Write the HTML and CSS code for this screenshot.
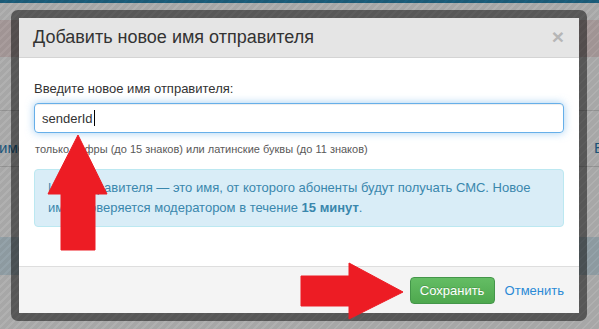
FILE: index.html
```html
<!DOCTYPE html>
<html lang="ru">
<head>
<meta charset="utf-8">
<title>Добавить новое имя отправителя</title>
<link rel="stylesheet" href="styles.css">
</head>
<body>
<div class="page">
  <div class="topbar"></div>
  <div class="gap-a"></div>
  <div class="danger-band"></div>
  <div class="gap-b"></div>
  <div class="table-row">
    <span class="cell-left">имё</span>
    <span class="cell-right">В</span>
  </div>
  <div class="gap-c"></div>
  <div class="info-band"></div>
</div>

<div class="backdrop"></div>

<div class="modal">
  <div class="modal-content">
    <div class="modal-header">
      <h4 class="modal-title">Добавить новое имя отправителя</h4>
      <span class="close">×</span>
    </div>
    <div class="modal-body">
      <label class="label">Введите новое имя отправителя:</label>
      <div class="input"><span class="input-text">senderId</span><span class="caret"></span></div>
      <p class="help">только цифры (до 15 знаков) или латинские буквы (до 11 знаков)</p>
      <div class="alert">Имя отправителя — это имя, от которого абоненты будут получать СМС. Новое<br>имя проверяется модератором в течение <b>15 минут</b>.</div>
    </div>
    <div class="modal-footer">
      <span class="btn-save">Сохранить</span>
      <a class="cancel">Отменить</a>
    </div>
  </div>
</div>

<svg class="arrows" width="599" height="329" viewBox="0 0 599 329">
  <polygon class="arrow" points="78,135 107,194 95,194 95,250 61,250 61,194 48,194"/>
  <polygon class="arrow" points="301,276 349,276 349,263 403,292 349,319 349,306 301,306"/>
</svg>
</body>
</html>
```
FILE: styles.css
```css
* { box-sizing: border-box; }
html, body { margin: 0; padding: 0; }
body {
  width: 599px;
  height: 329px;
  overflow: hidden;
  font-family: "Liberation Sans", Arial, sans-serif;
  font-size: 13px;
  color: #333;
  background: #fff;
}

.page { display: flex; flex-direction: column; }
.topbar { height: 3px; background: #2a8ab5; }
.gap-a { height: 17px; }
.danger-band { height: 37px; background: #f4e2e2; }
.gap-b { height: 53px; }
.table-row {
  height: 57px;
  border-top: 1px solid #dcdcdc;
  border-bottom: 1px solid #dcdcdc;
  display: flex;
  justify-content: space-between;
  align-items: flex-start;
  padding-top: 28px;
  overflow: hidden;
  color: #2e7fb6;
  font-size: 15px;
  line-height: 17px;
}
.cell-left { margin-left: -1px; }
.cell-right { margin-right: -5px; }
.gap-c { height: 70px; }
.info-band { height: 38px; background: #d7ebf5; }

.backdrop {
  position: fixed;
  inset: 0;
  background: repeating-linear-gradient(135deg,
    rgba(0,0,0,.345) 0, rgba(0,0,0,.345) 4px,
    rgba(0,0,0,.31) 4px, rgba(0,0,0,.31) 5.66px);
}

.modal {
  position: absolute;
  left: 11px;
  top: 10px;
  width: 576px;
  height: 311px;
  border: 8px solid rgba(0,0,0,.48);
  border-radius: 7px;
  background-clip: padding-box;
}
.modal-content {
  height: 100%;
  display: flex;
  flex-direction: column;
  background: #fff;
}

.modal-header {
  height: 40px;
  background: #e5e5e5;
  border-bottom: 1px solid #d4d4d4;
  display: flex;
  align-items: center;
  justify-content: space-between;
  padding: 0 15px 1px 14px;
}
.modal-title {
  margin: 0;
  font-size: 18px;
  font-weight: normal;
  color: #333;
  line-height: 24px;
}
.close {
  font-size: 21px;
  font-weight: bold;
  color: #b6b6b6;
  line-height: 20px;
}

.modal-body {
  flex: 1;
  padding: 21px 15px 0 15px;
  display: flex;
  flex-direction: column;
}
.label {
  line-height: 20px;
  margin-bottom: 4px;
  color: #333;
}
.input {
  height: 30px;
  border: 1px solid #66afe9;
  border-radius: 4px;
  box-shadow: inset 0 1px 1px rgba(0,0,0,.075), 0 0 8px rgba(102,175,233,.6);
  display: flex;
  align-items: center;
  padding-left: 7px;
  color: #333;
}
.caret {
  width: 1px;
  height: 16px;
  background: #000;
  margin-left: 1px;
}
.help {
  margin: 8px 0 0 1px;
  font-size: 11px;
  line-height: 17px;
  color: #595959;
}
.alert {
  margin-top: 11px;
  background: #d9edf7;
  border: 1px solid #bce8f1;
  border-radius: 4px;
  padding: 8px 13px;
  line-height: 20px;
  color: #3a87ad;
}

.modal-footer {
  height: 47px;
  background: #f4f4f4;
  border-top: 1px solid #dedede;
  display: flex;
  align-items: flex-start;
  justify-content: flex-end;
  padding: 10px 15px 0 0;
  gap: 10px;
}
.btn-save {
  width: 85px;
  height: 27px;
  display: flex;
  align-items: center;
  justify-content: center;
  color: #fff;
  background: linear-gradient(#64bd64, #4ea84e);
  border: 1px solid #44964a;
  border-radius: 4px;
  text-shadow: 0 -1px 0 rgba(0,0,0,.15);
}
.cancel {
  line-height: 27px;
  color: #2a8ad6;
  text-decoration: none;
}

.arrows {
  position: absolute;
  left: 0;
  top: 0;
  pointer-events: none;
}
.arrow {
  fill: #ed1c24;
  stroke: #ed1c24;
  stroke-width: 1;
  stroke-linejoin: round;
}
```
